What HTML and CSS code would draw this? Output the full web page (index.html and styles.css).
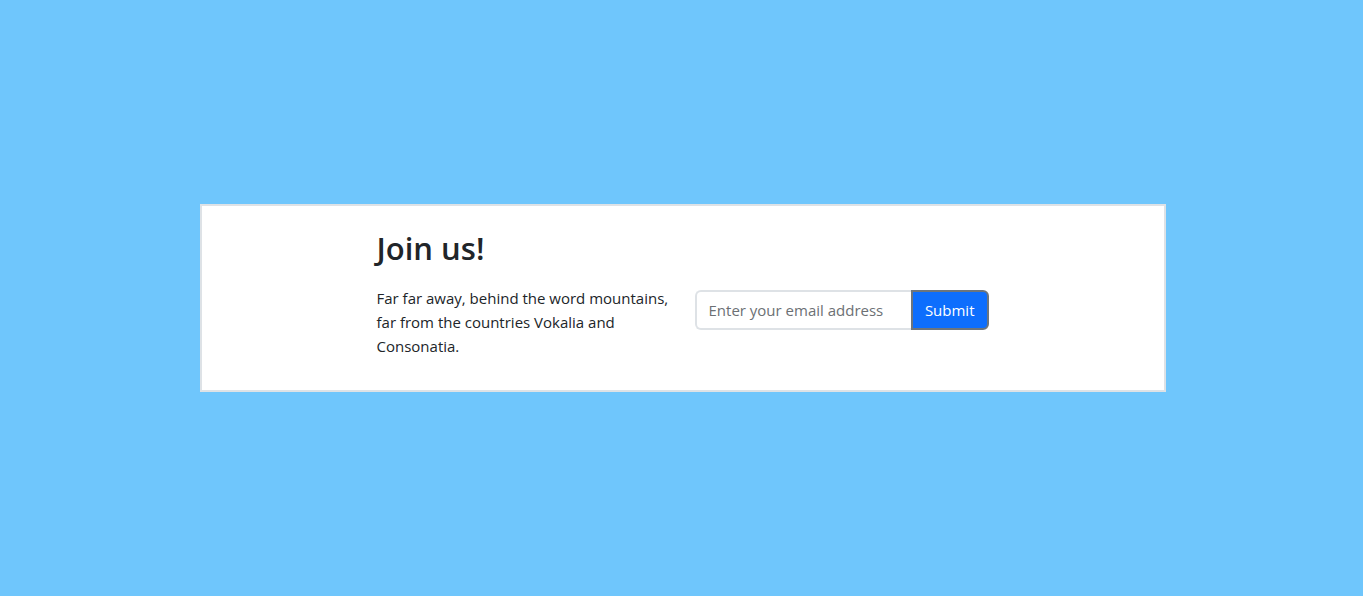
FILE: index.html
```html
<!DOCTYPE html>
<html lang="en">
<head>
<meta charset="utf-8">
<meta name="viewport" content="width=device-width, initial-scale=1">
<title>Join us!</title>
<link rel="stylesheet" href="styles.css">
</head>
<body>
<main class="signup">
  <div class="signup-body">
    <h2 class="signup-title">Join us!</h2>
    <div class="signup-row">
      <p class="signup-text">Far far away, behind the word mountains, far from the countries Vokalia and Consonatia.</p>
      <form class="signup-form">
        <input class="signup-input" type="email" placeholder="Enter your email address" aria-label="Email address">
        <button class="signup-button" type="submit">Submit</button>
      </form>
    </div>
  </div>
</main>
</body>
</html>
```
FILE: styles.css
```css
*, *::before, *::after {
  box-sizing: border-box;
}

body {
  display: flex;
  align-items: center;
  justify-content: center;
  min-height: 100vh;
  margin: 0;
  padding-left: 2px;
  background: #6fc6fc;
  color: #212529;
  font-family: "Segoe UI", "Open Sans", "Noto Sans", sans-serif;
  font-size: 15px;
  line-height: 24px;
}

.signup {
  width: 966px;
  max-width: 100%;
  padding: 24px 24px 32px;
  border: 2px solid #dee2e6;
  background: #fff;
}

.signup-body {
  max-width: 612px;
  margin: 0 auto;
}

.signup-title {
  margin: 0 0 20px;
  font-size: 31px;
  font-weight: 600;
  line-height: 36px;
}

.signup-row {
  display: grid;
  grid-template-columns: repeat(2, minmax(0, 1fr));
  align-items: start;
  gap: 24px;
}

.signup-text {
  margin: 0;
}

.signup-form {
  display: flex;
  padding-top: 4px;
}

.signup-input {
  flex: 1;
  min-width: 0;
  height: 40px;
  padding: 6px 12px;
  border: 2px solid #dee2e6;
  border-right: 0;
  border-radius: 6px 0 0 6px;
  background: #fff;
  color: inherit;
  font: inherit;
}

.signup-input::placeholder {
  color: #6c7074;
  opacity: 1;
}

.signup-button {
  height: 40px;
  padding: 6px 12px;
  border: 2px solid #6c757d;
  border-radius: 0 6px 6px 0;
  background: #0d6efd;
  color: #fff;
  font: inherit;
}
```
